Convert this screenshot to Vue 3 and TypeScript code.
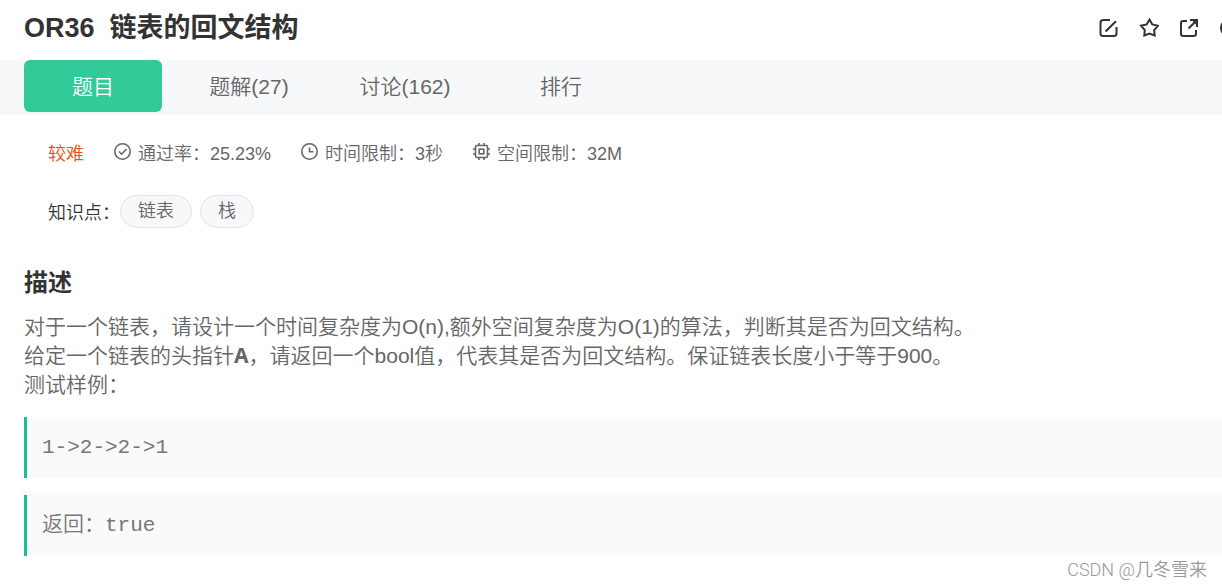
<script setup lang="ts">
import { ref } from 'vue'

interface Tab {
  id: string
  label: string
}

interface Meta {
  icon: 'check' | 'clock' | 'chip'
  label: string
  value: string
}

const tabs: Tab[] = [
  { id: 'problem', label: '题目' },
  { id: 'solutions', label: '题解(27)' },
  { id: 'discussion', label: '讨论(162)' },
  { id: 'ranking', label: '排行' },
]
const active = ref<string>('problem')

const metas: Meta[] = [
  { icon: 'check', label: '通过率', value: '25.23%' },
  { icon: 'clock', label: '时间限制', value: '3秒' },
  { icon: 'chip', label: '空间限制', value: '32M' },
]

const tags: string[] = ['链表', '栈']
const samples: string[] = ['1->2->2->1', '返回：true']
</script>

<template>
  <main class="page">
    <header class="head">
      <h1 class="title"><span>OR36</span><span>链表的回文结构</span></h1>
      <div class="actions">
        <button type="button" class="action" aria-label="编辑">
          <svg viewBox="0 0 20 20" width="20" height="20">
            <path d="M11 2H4.500Q1.500 2 1.500 4.500V15.500Q1.500 18 4.500 18H14.500Q17.500 18 17.500 15.500V9M6.500 13.500L17 3.200" />
          </svg>
        </button>
        <button type="button" class="action" aria-label="收藏">
          <svg viewBox="0 0 20 20" width="20" height="20">
            <path d="M10.500 1.500L13.300 6.400L19 7.700L15.200 12L15.700 17.500L10.500 15.500L5.300 17.500L5.800 12L2 7.700L7.700 6.400Z" />
          </svg>
        </button>
        <button type="button" class="action" aria-label="分享">
          <svg viewBox="0 0 20 20" width="20" height="20">
            <path d="M8 3H4.200Q2 3 2 5.200V15.800Q2 18 4.200 18H14.800Q17 18 17 15.800V12M9.500 10.500L17 3" />
            <path d="M11 2H18V9" />
            <path class="solid" d="M14 2H18V6Z" />
          </svg>
        </button>
        <button type="button" class="action" aria-label="更多">
          <svg viewBox="0 0 20 20" width="20" height="20">
            <circle cx="10" cy="10" r="8" />
          </svg>
        </button>
      </div>
    </header>

    <nav class="tabs">
      <button
        v-for="tab in tabs"
        :key="tab.id"
        type="button"
        class="tab"
        :class="{ active: active === tab.id }"
        @click="active = tab.id"
      >{{ tab.label }}</button>
    </nav>

    <section class="info">
      <div class="metas">
        <span class="level">较难</span>
        <span v-for="m in metas" :key="m.label" class="meta">
          <svg v-if="m.icon === 'check'" viewBox="0 0 18 18" width="18" height="18">
            <circle cx="8.500" cy="8.500" r="7.700" />
            <path d="M5 8.500L7.700 11.200L12.500 6" />
          </svg>
          <svg v-else-if="m.icon === 'clock'" viewBox="0 0 18 18" width="18" height="18">
            <circle cx="8.500" cy="8.500" r="7.700" />
            <path d="M8.500 4.500V8.800H12.500" />
          </svg>
          <svg v-else viewBox="0 0 18 18" width="18" height="18">
            <rect x="2.500" y="2.500" width="12" height="12" rx="1.500" />
            <rect x="6.200" y="6.200" width="4.600" height="4.600" />
            <path d="M6 2.500V0M11 2.500V0M6 17V14.500M11 17V14.500M2.500 6H0M2.500 11H0M17 6H14.500M17 11H14.500" />
          </svg>
          <span>{{ m.label }}：{{ m.value }}</span>
        </span>
      </div>
      <div class="knowledge">
        <span>知识点：</span>
        <ul class="tags">
          <li v-for="tag in tags" :key="tag"><a href="#" class="tag">{{ tag }}</a></li>
        </ul>
      </div>
    </section>

    <section class="description">
      <h2>描述</h2>
      <div class="statement">
        <p>对于一个链表，请设计一个时间复杂度为O(n),额外空间复杂度为O(1)的算法，判断其是否为回文结构。</p>
        <p>给定一个链表的头指针<b>A</b>，请返回一个bool值，代表其是否为回文结构。保证链表长度小于等于900。</p>
        <p>测试样例：</p>
      </div>
      <pre v-for="s in samples" :key="s">{{ s }}</pre>
    </section>

    <footer class="credit">CSDN @几冬雪来</footer>
  </main>
</template>

<style>
body {
  background: #fff;
}
</style>

<style scoped>
.page {
  overflow: hidden;
  color: #666;
  font-family: "Liberation Sans", "Noto Sans CJK SC", sans-serif;
  font-size: 21px;
  font-weight: 350;
}
button {
  border: 0;
  background: none;
  font: inherit;
  color: inherit;
  cursor: pointer;
}
svg {
  display: block;
  fill: none;
  stroke: currentColor;
}
.head {
  display: flex;
  align-items: center;
  justify-content: space-between;
  height: 60px;
  padding: 0 0 4px 24px;
  box-sizing: border-box;
}
.title {
  display: flex;
  gap: 15px;
  margin: 0;
  font-size: 27px;
  line-height: 40px;
  color: #333;
}
.actions {
  display: flex;
  gap: 20px;
  margin-right: -17px;
  color: #333;
}
.action {
  padding: 0;
  stroke-width: 2;
}
.solid {
  fill: currentColor;
}
.tabs {
  display: flex;
  gap: 18px;
  padding: 0 24px 1px;
  background: #f7f8fa;
  border-bottom: 1px solid #f1f2f4;
}
.tab {
  width: 138px;
  height: 52px;
  padding: 0 0 2px;
  border-radius: 6px;
}
.tab.active {
  background: #32ca99;
  color: #fff;
}
.info {
  padding: 25px 48px 0;
  font-size: 18px;
}
.metas {
  display: flex;
  gap: 30px;
  line-height: 30px;
}
.level {
  color: #eb4f0c;
}
.meta {
  display: flex;
  gap: 6px;
}
.meta svg {
  margin-top: 4px;
  stroke-width: 1.6;
}
.knowledge {
  display: flex;
  align-items: flex-start;
  margin-top: 26px;
  line-height: 36px;
  color: #333;
}
.tags {
  display: flex;
  gap: 8px;
  margin: 0;
  padding: 0;
  list-style: none;
}
.tag {
  display: block;
  padding: 0 17px;
  border: 1px solid #e1e4e8;
  border-radius: 17px;
  background: #f7f8fa;
  color: #666;
  line-height: 31px;
  text-decoration: none;
}
.description {
  padding-left: 24px;
}
h2 {
  margin: 34px 0 11px;
  font-size: 24px;
  line-height: 36px;
  color: #333;
}
.statement {
  margin-bottom: 18px;
}
p {
  margin: 0;
  line-height: 29px;
}
b {
  font-family: "Noto Sans", sans-serif;
  font-weight: 700;
}
pre {
  margin: 17px 0 0;
  padding: 15px;
  border-left: 3px solid #1abc9c;
  background: #fafafa;
  color: #777;
  font-family: "Liberation Mono", "Noto Sans CJK SC", monospace;
  font-size: 21px;
  line-height: 31px;
}
.credit {
  padding: 0 15px 4px;
  font-family: Roboto, "Noto Sans CJK SC", sans-serif;
  font-size: 18px;
  line-height: 27px;
  text-align: right;
  color: #999;
}
</style>
